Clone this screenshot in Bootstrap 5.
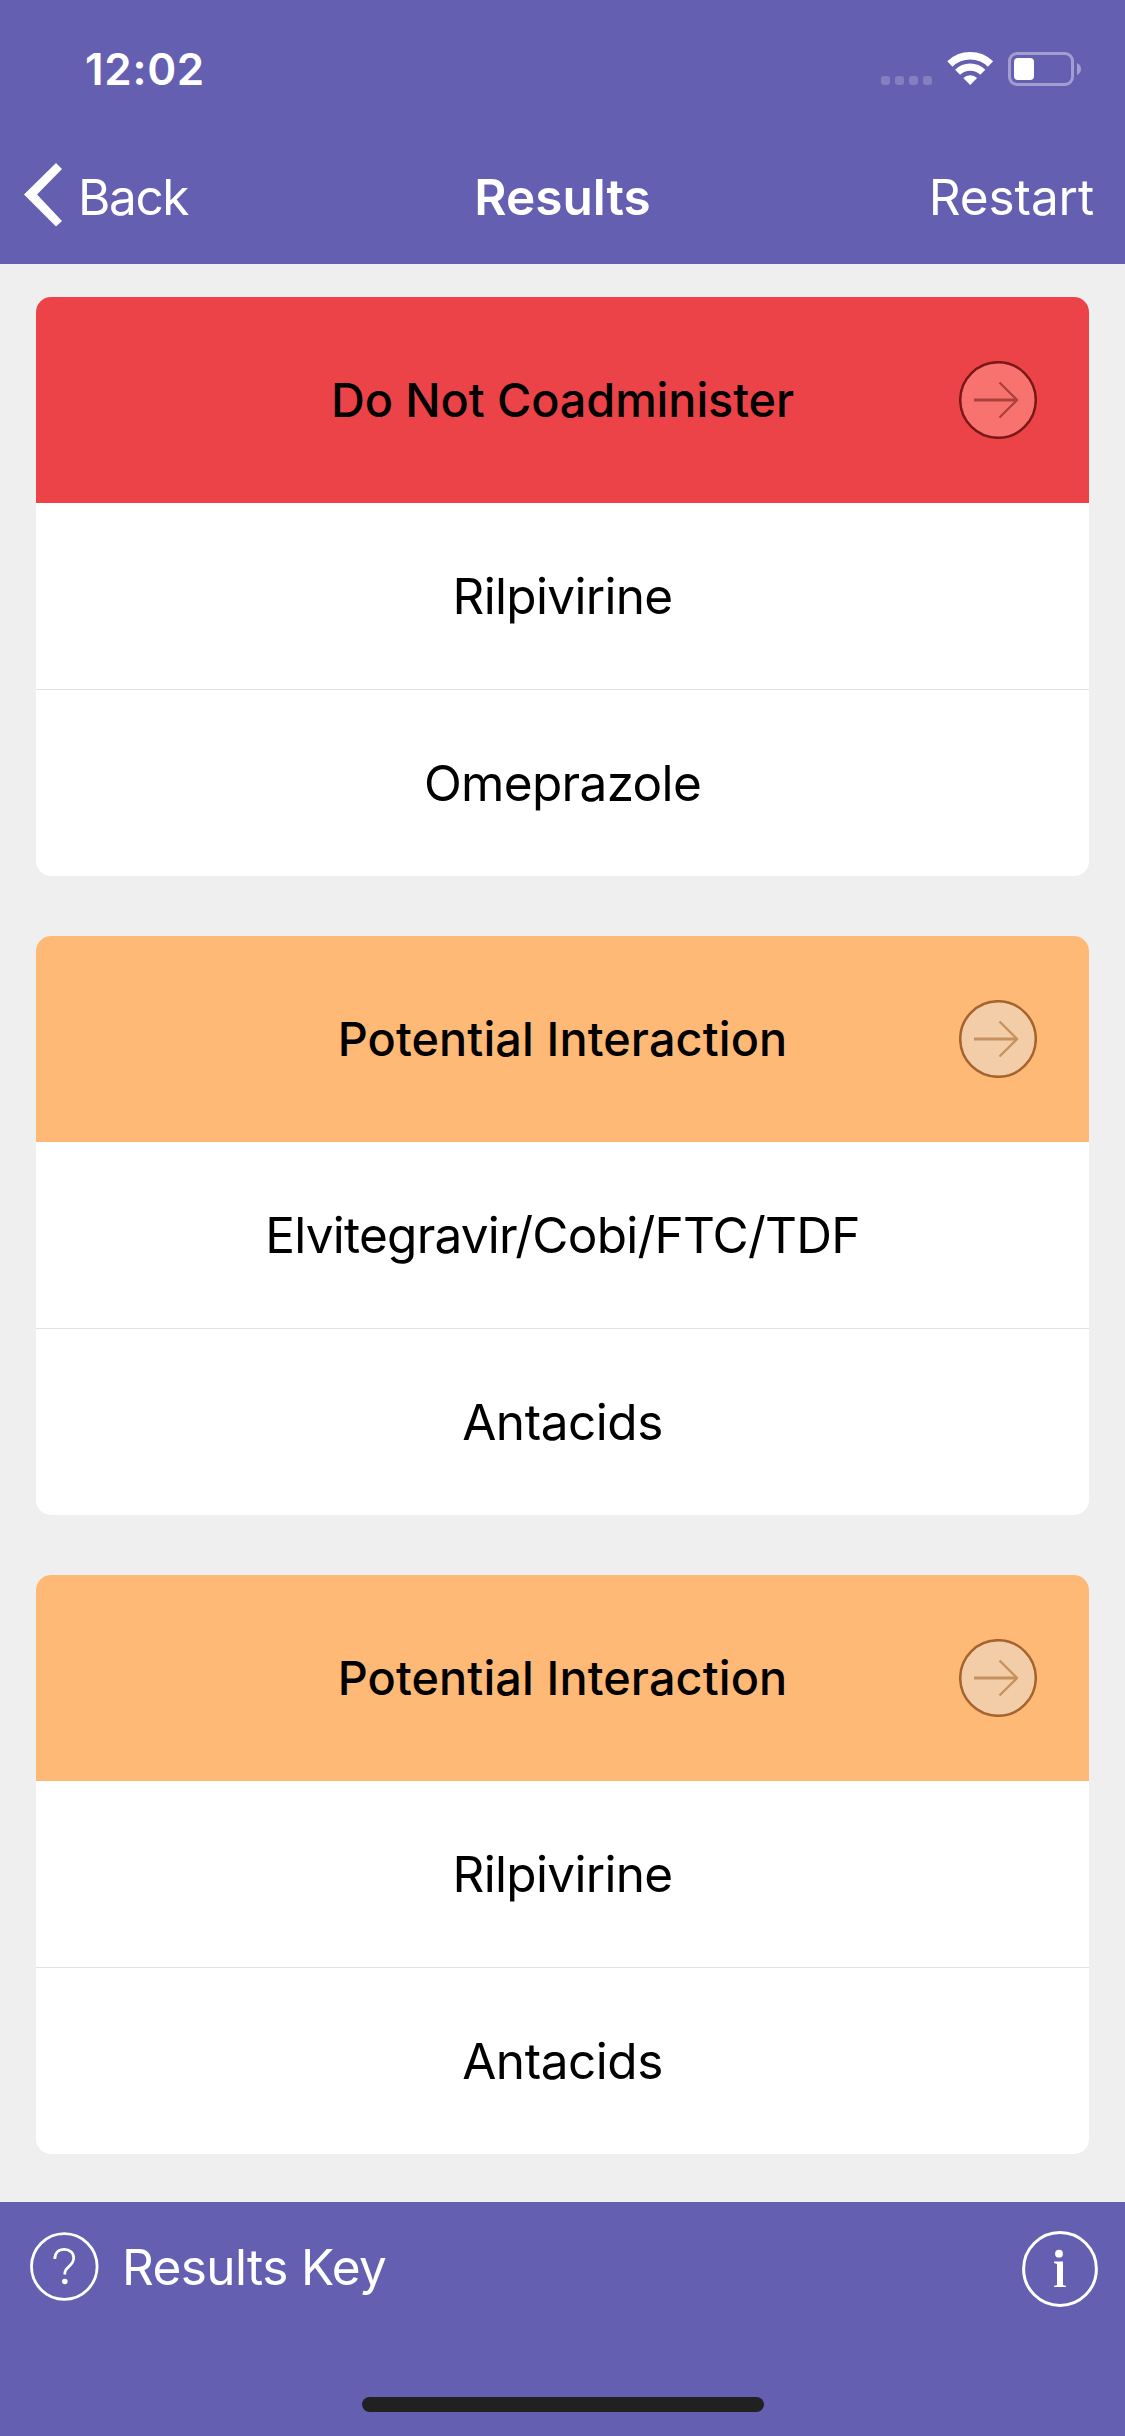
<!DOCTYPE html>
<html lang="en">
<head>
<meta charset="utf-8">
<meta name="viewport" content="width=device-width, initial-scale=1">
<title>Results</title>
<link href="https://cdn.jsdelivr.net/npm/bootstrap@5.3.0/dist/css/bootstrap.min.css" rel="stylesheet">
<style>
  body { background: #efefef; font-family: Inter, "Liberation Sans", sans-serif; font-size: 49.5px; line-height: 1.2; color: #000; }
  svg { display: block; flex: none; }
  .brand-bar { background: #655fb1; color: #fff; }
  .status-row { height: 132px; padding: 6px 44px 0 85px; }
  .clock { font-size: 44px; font-weight: 600; letter-spacing: .7px; }
  .nav-row { height: 132px; padding: 0 24px; }
  .nav-side { flex: 1 1 0; }
  .back-link { gap: 16px; letter-spacing: -1.4px; }
  .back-link svg { margin-bottom: 6px; }
  .restart-link { padding-right: 7px; letter-spacing: -.1px; }
  .screen-title { font-size: inherit; font-weight: 600; }
  .result-list { height: 1938px; padding: 33px 36px 48px; gap: 60px; }
  .result-card { border: 0; border-radius: 15px; overflow: hidden; --bs-card-bg: #fff; color: #000; }
  .result-head { height: 206px; display: grid; grid-template-columns: 1fr auto 1fr; align-items: center; font-size: 46.8px; font-weight: 500; padding-right: 52px; padding-left: 52px; }
  .result-head svg { grid-column: 3; justify-self: end; stroke: var(--arrow); }
  .result-head span { grid-column: 2; }
  .head-danger { background: #ec4348; --disc: #f8736f; --ring: #7b1716; --arrow: #ac423f; letter-spacing: -.09px; }
  .head-warning { background: #ffb976; --disc: #f2cda8; --ring: #a5642d; --arrow: #c6915e; letter-spacing: .12px; }
  .disc { fill: var(--disc); stroke: var(--ring); }
  .drug { height: 186px; padding-top: 2px; letter-spacing: -.68px; }
  .drug + .drug { height: 187px; border-top: 1px solid #e2e2e2; }
  .wide-name { letter-spacing: -.77px; }
  .short-name { letter-spacing: -.46px; }
  .footer-bar { height: 234px; }
  .footer-row { height: 130px; padding: 0 27px 0 30px; }
  .key-link { gap: 23px; letter-spacing: -.6px; }
  .key-link svg { margin-bottom: 2px; }
  .key-link span { padding-top: 2px; }
  .info-icon { margin-top: 4px; }
  .home-line { width: 402px; height: 15px; margin-top: 65px; background: #212121; }
</style>
<script src="https://cdn.jsdelivr.net/npm/bootstrap@5.3.0/dist/js/bootstrap.bundle.min.js"></script>
</head>
<body class="d-flex flex-column">
<svg class="d-none">
  <symbol id="go" viewBox="0 0 78 78">
    <circle class="disc" cx="39" cy="39" r="37.800" stroke-width="2.500"/>
    <path d="M15 39H57" fill="none" stroke-width="3"/>
    <path d="M40.500 21.500 58 39 40.500 56.500" fill="none" stroke-width="2.300"/>
  </symbol>
</svg>

<header class="brand-bar">
  <div class="status-row d-flex align-items-center justify-content-between">
    <span class="clock">12:02</span>
    <svg width="200" height="36" viewBox="881 51 200 36">
      <g fill="#fff" opacity=".2">
        <rect x="881" y="76" width="9" height="9" rx="3"/><rect x="895" y="76" width="9" height="9" rx="3"/>
        <rect x="909" y="76" width="9" height="9" rx="3"/><rect x="923" y="76" width="9" height="9" rx="3"/>
      </g>
      <g transform="translate(970.2 85)" fill="none" stroke="#fff">
        <path d="M-20.300 -21A29.200 29.200 0 0 1 20.300 -21" stroke-width="7.600"/>
        <path d="M-12.600 -12.800A18 18 0 0 1 12.600 -12.800" stroke-width="7.200"/>
        <path d="M0 0-6.900-7A10 10 0 0 1 6.900-7Z" fill="#fff" stroke="none"/>
      </g>
      <g opacity=".4">
        <rect x="1009.500" y="53.500" width="63" height="31" rx="7.500" fill="none" stroke="#fff" stroke-width="3"/>
        <path d="M1077 63Q1081 65 1081 69T1077 75Z" fill="#fff"/>
      </g>
      <rect x="1014" y="58" width="20" height="22" rx="4" fill="#fff"/>
    </svg>
  </div>
  <nav class="nav-row d-flex align-items-center">
    <div class="nav-side back-link d-flex align-items-center">
      <svg width="38" height="64" viewBox="0 0 38 64"><path d="M0 31.500 32 0 38 6 13 31.500 38 58 32 63.500Z" fill="#fff"/></svg>
      <span>Back</span>
    </div>
    <h1 class="screen-title m-0">Results</h1>
    <div class="nav-side text-end"><span class="restart-link">Restart</span></div>
  </nav>
</header>

<main class="result-list d-flex flex-column">
  <section class="card result-card">
    <div class="result-head head-danger"><span>Do Not Coadminister</span><svg width="78" height="78"><use href="#go"/></svg></div>
    <div class="drug d-flex align-items-center justify-content-center">Rilpivirine</div>
    <div class="drug d-flex align-items-center justify-content-center">Omeprazole</div>
  </section>
  <section class="card result-card">
    <div class="result-head head-warning"><span>Potential Interaction</span><svg width="78" height="78"><use href="#go"/></svg></div>
    <div class="drug wide-name d-flex align-items-center justify-content-center">Elvitegravir/Cobi/FTC/TDF</div>
    <div class="drug short-name d-flex align-items-center justify-content-center">Antacids</div>
  </section>
  <section class="card result-card">
    <div class="result-head head-warning"><span>Potential Interaction</span><svg width="78" height="78"><use href="#go"/></svg></div>
    <div class="drug d-flex align-items-center justify-content-center">Rilpivirine</div>
    <div class="drug short-name d-flex align-items-center justify-content-center">Antacids</div>
  </section>
</main>

<footer class="brand-bar footer-bar">
  <div class="footer-row d-flex align-items-center justify-content-between">
    <div class="key-link d-flex align-items-center">
      <svg width="69" height="69" viewBox="0 0 69 69" fill="none" stroke="#fff">
        <circle cx="34.300" cy="34.500" r="32.800" stroke-width="2.800"/>
        <path d="M24.800 27C24.800 20.500 28.800 17.300 34.300 17.300S43.700 20.800 43.700 26C43.700 30 41.500 32.200 39 34.500C36 37.300 34.800 38.500 34.800 42.500" stroke-width="2.700"/>
        <circle cx="34.800" cy="49.500" r="2.800" fill="#fff" stroke="none"/>
      </svg>
      <span>Results Key</span>
    </div>
    <svg class="info-icon" width="76" height="76" viewBox="0 0 76 76" fill="#fff">
      <circle cx="38" cy="38" r="36.400" fill="none" stroke="#fff" stroke-width="3"/>
      <circle cx="37" cy="22.700" r="3.900"/>
      <path d="M32 30.500H41V54L44 55V56H32V55L35 54V33L32 32Z"/>
    </svg>
  </div>
  <div class="home-line rounded-pill mx-auto"></div>
</footer>
</body>
</html>
